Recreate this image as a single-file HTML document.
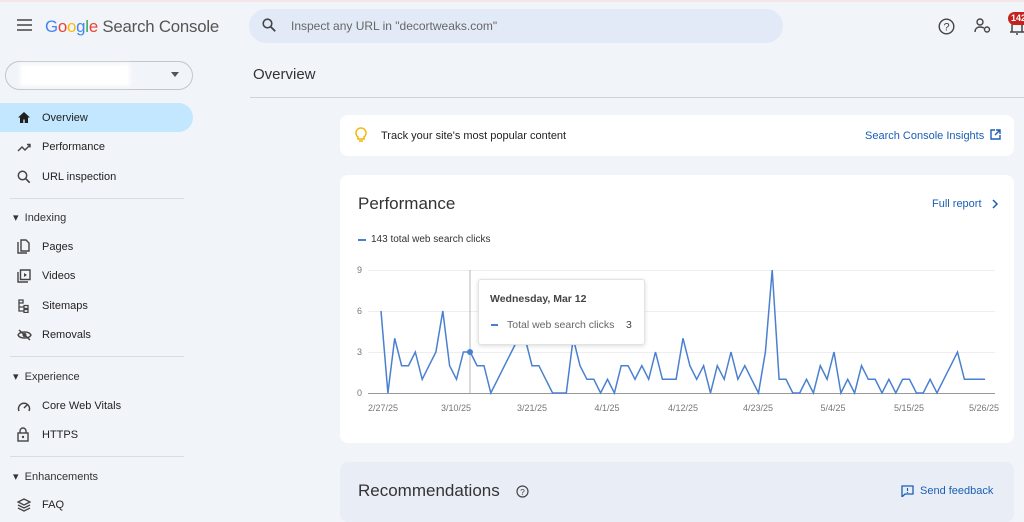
<!DOCTYPE html><html><head><meta charset="utf-8"><style>
*{box-sizing:border-box;margin:0;padding:0}
body{width:1024px;height:519px;overflow:hidden;background:#f1f4f9;font-family:"Liberation Sans",Arial,sans-serif;color:#1f1f1f;position:relative}
.a{position:absolute}
.nav{font-size:11px;color:#1f1f1f}
.ni{position:absolute;left:0;width:193px;height:29px;display:flex;align-items:center}
.ni svg{position:absolute;left:17px}
.ni span{position:absolute;left:42px}
.sec{position:absolute;left:13px;font-size:11px;color:#333}
.hr{position:absolute;left:10px;width:174px;height:1px;background:#dadce0}
.card{position:absolute;background:#fff;border-radius:8px}
.blue{color:#1a5fb4}
</style></head><body>
<div class="a" style="left:0;top:0;width:1024px;height:2px;background:#f6e6ea"></div>
<svg class="a" style="left:17px;top:19px" width="15" height="12"><path d="M0 1h15M0 6h15M0 11h15" stroke="#444" stroke-width="1.6"/></svg>
<div class="a" style="left:45px;top:17px;font-size:16.8px;letter-spacing:-0.2px"><span style="color:#4285f4">G</span><span style="color:#ea4335">o</span><span style="color:#fbbc05">o</span><span style="color:#4285f4">g</span><span style="color:#34a853">l</span><span style="color:#ea4335">e</span> <span style="color:#555">Search Console</span></div>
<div class="a" style="left:249px;top:9px;width:534px;height:34px;border-radius:17px;background:#e3eaf7"></div>
<svg class="a" style="left:262px;top:18px" width="14" height="14"><circle cx="5.5" cy="5.5" r="4.3" fill="none" stroke="#444" stroke-width="1.6"/><path d="M8.7 8.7l4.5 4.5" stroke="#444" stroke-width="1.8"/></svg>
<div class="a" style="left:291px;top:19px;font-size:12px;color:#666">Inspect any URL in "decortweaks.com"</div>
<svg class="a" style="left:938px;top:18px" width="17" height="17"><circle cx="8.5" cy="8.5" r="7.3" fill="none" stroke="#444" stroke-width="1.4"/><text x="8.5" y="12.5" font-size="11" text-anchor="middle" fill="#444" font-family="Liberation Sans">?</text></svg>
<svg class="a" style="left:974px;top:18px" width="18" height="16"><circle cx="6" cy="4" r="3" fill="none" stroke="#444" stroke-width="1.4"/><path d="M1 14c0-4 3-5 5-5s3 .5 4 1" fill="none" stroke="#444" stroke-width="1.4"/><circle cx="13" cy="11.5" r="2.5" fill="none" stroke="#444" stroke-width="1.4"/></svg>
<svg class="a" style="left:1010px;top:18px" width="14" height="18"><path d="M2 14V8a5 5 0 0110 0v6M0 14h14M6 16h2" fill="none" stroke="#444" stroke-width="1.5"/></svg>
<div class="a" style="left:1008px;top:12px;width:24px;height:13px;border-radius:7px;background:#c5221f;color:#fff;font-size:9px;font-weight:bold;padding-left:3px;line-height:13px">142</div>
<div class="a" style="left:5px;top:61px;width:188px;height:29px;border:1px solid #c4c7c5;border-radius:15px;background:#f1f4f9"></div>
<div class="a" style="left:20px;top:64px;width:110px;height:22px;background:#fff;filter:blur(2px)"></div>
<svg class="a" style="left:171px;top:72px" width="8" height="5"><path d="M0 0h8L4 5z" fill="#555"/></svg>
<div class="nav">
<div class="ni" style="top:103px;background:#c2e7ff;border-radius:0 15px 15px 0"><svg width="14" height="13"><path d="M7 1L1 6.5h2V12h3.3V8.5h1.4V12H11V6.5h2z" fill="#1f1f1f"/></svg><span>Overview</span></div>
<div class="ni" style="top:132px"><svg width="14" height="12"><path d="M1 10l4-4 3 3 5-5M10 3.5h3v3" fill="none" stroke="#444" stroke-width="1.4"/></svg><span>Performance</span></div>
<div class="ni" style="top:162px"><svg width="14" height="14"><circle cx="5.5" cy="5.5" r="4.2" fill="none" stroke="#444" stroke-width="1.5"/><path d="M8.7 8.7l4 4" stroke="#444" stroke-width="1.7"/></svg><span>URL inspection</span></div>
<div class="hr" style="top:198px"></div>
<div class="sec" style="top:211px">▾ &nbsp;Indexing</div>
<div class="ni" style="top:232px"><svg width="14" height="15"><path d="M1 3v11h9M4 1h5l3 3v8H4z" fill="none" stroke="#444" stroke-width="1.4"/></svg><span>Pages</span></div>
<div class="ni" style="top:261px"><svg width="14" height="14"><path d="M1 3v10h10M3.5 1h9.5v9.5H3.5z" fill="none" stroke="#444" stroke-width="1.4"/><path d="M7 4l3 2-3 2z" fill="#444"/></svg><span>Videos</span></div>
<div class="ni" style="top:291px"><svg width="14" height="14"><path d="M2 1h4v3H2zM2 4v8h5M2 8h5M7 6.5h4v3H7zM7 10.5h4v3H7z" fill="none" stroke="#444" stroke-width="1.3"/></svg><span>Sitemaps</span></div>
<div class="ni" style="top:320px"><svg width="15" height="12"><path d="M1 6c2-4 11-4 13 0-2 4-11 4-13 0z" fill="none" stroke="#444" stroke-width="1.4"/><circle cx="7.5" cy="6" r="2" fill="#444"/><path d="M2 1l11 10" stroke="#444" stroke-width="1.5"/></svg><span>Removals</span></div>
<div class="hr" style="top:356px"></div>
<div class="sec" style="top:370px">▾ &nbsp;Experience</div>
<div class="ni" style="top:391px"><svg width="14" height="12"><path d="M2 11a5.5 5.5 0 1110 0" fill="none" stroke="#444" stroke-width="1.5"/><path d="M7 8l3-3" stroke="#444" stroke-width="1.5"/></svg><span>Core Web Vitals</span></div>
<div class="ni" style="top:420px"><svg width="12" height="15"><path d="M3 6V4a3 3 0 016 0v2" fill="none" stroke="#444" stroke-width="1.4"/><rect x="1" y="6" width="10" height="8" fill="none" stroke="#444" stroke-width="1.4"/><circle cx="6" cy="10" r="1.2" fill="#444"/></svg><span>HTTPS</span></div>
<div class="hr" style="top:456px"></div>
<div class="sec" style="top:470px">▾ &nbsp;Enhancements</div>
<div class="ni" style="top:490px"><svg width="14" height="14"><path d="M7 1l6 3-6 3-6-3zM1 7l6 3 6-3M1 10l6 3 6-3" fill="none" stroke="#444" stroke-width="1.3"/></svg><span>FAQ</span></div>
</div>
<div class="a" style="left:253px;top:66px;font-size:15px;color:#333">Overview</div>
<div class="a" style="left:250px;top:97px;width:774px;height:1px;background:#d0d3d8"></div>
<div class="card" style="left:340px;top:115px;width:674px;height:41px"></div>
<svg class="a" style="left:355px;top:127px" width="12" height="17"><path d="M6 1a5 5 0 00-3 9v2h6v-2a5 5 0 00-3-9zM4 14h4" fill="none" stroke="#f4b400" stroke-width="1.5"/></svg>
<div class="a" style="left:381px;top:130px;font-size:11px">Track your site's most popular content</div>
<div class="a blue" style="left:865px;top:130px;font-size:11px">Search Console Insights</div>
<svg class="a" style="left:990px;top:129px" width="11" height="11"><path d="M5 1H1v9h9V6M6 1h4v4M10 1L5 6" fill="none" stroke="#1a5fb4" stroke-width="1.4"/></svg>
<div class="card" style="left:340px;top:175px;width:674px;height:268px"></div>
<div class="a" style="left:358px;top:194px;font-size:17px;color:#333">Performance</div>
<div class="a blue" style="left:932px;top:198px;font-size:11px">Full report</div>
<svg class="a" style="left:992px;top:199px" width="7" height="10"><path d="M1 1l4 4-4 4" fill="none" stroke="#1a5fb4" stroke-width="1.5"/></svg>
<div class="a" style="left:358px;top:239px;width:8px;height:2px;background:#4a7fd0"></div>
<div class="a" style="left:371px;top:234px;font-size:10px;color:#333">143 total web search clicks</div>
<svg class="a" style="left:340px;top:260px" width="674" height="160" font-family="Liberation Sans" font-size="9" fill="#777">
<g stroke="#eee"><path d="M28 10.5H655M28 51.5H655M28 92.5H655"/></g>
<path d="M28 133.5H655" stroke="#999"/>
<text x="22" y="13" text-anchor="end">9</text><text x="22" y="54" text-anchor="end">6</text><text x="22" y="95" text-anchor="end">3</text><text x="22" y="136" text-anchor="end">0</text>
<g text-anchor="middle"><text x="43" y="151">2/27/25</text><text x="116" y="151">3/10/25</text><text x="192" y="151">3/21/25</text><text x="267" y="151">4/1/25</text><text x="343" y="151">4/12/25</text><text x="418" y="151">4/23/25</text><text x="493" y="151">5/4/25</text><text x="569" y="151">5/15/25</text><text x="644" y="151">5/26/25</text></g>
<path d="M130 10V134" stroke="#999" stroke-width="0.7"/>
<path id="ln" fill="none" stroke="#4a80d0" stroke-width="1.5"/>
<circle cx="130" cy="92" r="3" fill="#4a80d0"/>
</svg>
<div class="a" style="left:478px;top:279px;width:167px;height:66px;background:#fff;border:1px solid #e3e3e3;box-shadow:0 1px 4px rgba(0,0,0,.15);border-radius:3px"></div>
<div class="a" style="left:490px;top:293px;font-size:10.5px;color:#444;font-weight:bold">Wednesday, Mar 12</div>
<div class="a" style="left:491px;top:324px;width:7px;height:2px;background:#4a7fd0"></div>
<div class="a" style="left:507px;top:319px;font-size:10.5px;color:#666">Total web search clicks</div>
<div class="a" style="left:626px;top:319px;font-size:10.5px;color:#444">3</div>
<div class="card" style="left:340px;top:462px;width:674px;height:60px;background:#e9eef6"></div>
<div class="a" style="left:358px;top:481px;font-size:17px;color:#333">Recommendations</div>
<svg class="a" style="left:516px;top:485px" width="13" height="13"><circle cx="6.5" cy="6.5" r="5.5" fill="none" stroke="#444" stroke-width="1.2"/><text x="6.5" y="10" font-size="8.5" text-anchor="middle" fill="#444" font-family="Liberation Sans">?</text></svg>
<svg class="a" style="left:901px;top:485px" width="13" height="12"><path d="M1 1h11v8H4l-3 3z" fill="none" stroke="#1a5fb4" stroke-width="1.3"/><path d="M6.5 3v3M6.5 7v1" stroke="#1a5fb4" stroke-width="1.2"/></svg>
<div class="a blue" style="left:920px;top:485px;font-size:11px">Send feedback</div>
<script>
var v=[6,0,4,2,2,3,1,2,3,6,2,1,3,3,2,2,0,1,2,3,4,4,2,2,1,0,0,0,4,2,1,1,0,1,0,2,2,1,2,1,3,1,1,1,4,2,1,2,0,2,1,3,1,2,1,0,3,9,1,1,0,0,1,0,2,1,3,0,1,0,2,1,1,0,1,0,1,1,0,0,1,0,1,2,3,1,1,1,1];
var d="",n=v.length;for(var i=0;i<n;i++){var x=41+i*(604/(n-1)),y=133-v[i]*13.67;d+=(i?"L":"M")+x.toFixed(1)+" "+y.toFixed(1);}
document.getElementById("ln").setAttribute("d",d);
</script>
</body></html>
